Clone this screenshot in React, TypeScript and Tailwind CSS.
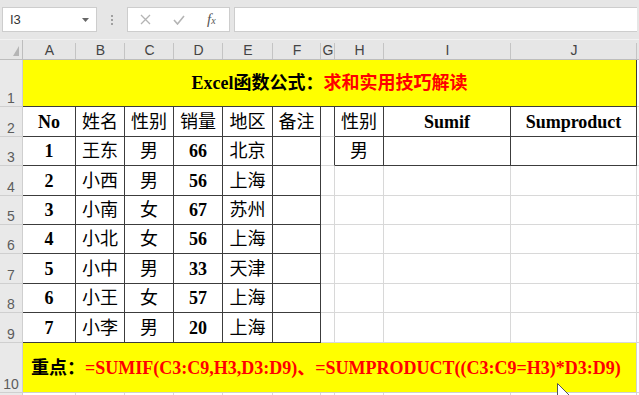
import React from 'react';

const cols = ['A', 'B', 'C', 'D', 'E', 'F', 'G', 'H', 'I', 'J'];

const people = [
  ['1', '王东', '男', '66', '北京'],
  ['2', '小西', '男', '56', '上海'],
  ['3', '小南', '女', '67', '苏州'],
  ['4', '小北', '女', '56', '上海'],
  ['5', '小中', '男', '33', '天津'],
  ['6', '小王', '女', '57', '上海'],
  ['7', '小李', '男', '20', '上海'],
];

const rowHeights = ['h-[29px]', 'h-[30px]', 'h-[29px]', 'h-[29px]', 'h-[30px]', 'h-[29px]', 'h-[30px]'];

const light = 'border-r border-b border-[#d8d8d8]';
const dark = 'border-r border-b border-[#3c3c3c]';

function RowHead({ n, h }: { n?: string; h: string }) {
  return (
    <div className={`${h} flex items-end justify-center bg-[#e9e9e9] border-r border-b border-[#cfcfcf] pb-[1px] font-['Liberation_Sans',sans-serif] text-[14px] leading-none text-[#5c5c5c]`}>
      {n}
    </div>
  );
}

function Cell({ children, border = light, bold, h }: { children?: React.ReactNode; border?: string; bold?: boolean; h: string }) {
  return (
    <div className={`${h} ${border} flex items-center justify-center text-[18px] leading-none text-black ${bold ? 'font-bold' : 'font-normal'}`}>
      {children}
    </div>
  );
}

function Toolbar() {
  return (
    <div className="flex h-[40px] items-start gap-0 border-b border-[#f2f2f2] bg-[#e6e6e6] px-[2px] pt-[7px] font-['Liberation_Sans',sans-serif]">
      <div className="flex h-[25px] w-[95px] items-center justify-between border border-[#cdcdcd] bg-white pl-[7px] pr-[7px] text-[13px] text-[#333]">
        <span>I3</span>
        <svg width="7" height="4" viewBox="0 0 7 4">
          <path d="M0 0h7L3.5 4z" fill="#666" />
        </svg>
      </div>
      <div className="flex h-[25px] w-[30px] flex-col items-center justify-center gap-[2px]">
        <span className="h-[2px] w-[2px] bg-[#a0a0a0]" />
        <span className="h-[2px] w-[2px] bg-[#a0a0a0]" />
        <span className="h-[2px] w-[2px] bg-[#a0a0a0]" />
      </div>
      <div className="flex h-[25px] w-[103px] items-center border border-[#cdcdcd] bg-white">
        <svg className="ml-[12px]" width="11" height="11" viewBox="0 0 11 11">
          <path d="M1 1l9 9M10 1l-9 9" stroke="#b4b4b4" strokeWidth="1.3" />
        </svg>
        <svg className="ml-[22px]" width="12" height="10" viewBox="0 0 12 10">
          <path d="M1 5l3.5 4L11 1" stroke="#b4b4b4" strokeWidth="1.6" fill="none" />
        </svg>
        <span className="ml-[22px] font-['Liberation_Serif',serif] text-[15px] italic leading-none text-[#555]">
          f<span className="text-[10px]">x</span>
        </span>
      </div>
      <div className="ml-[4px] h-[25px] flex-1 border border-[#cdcdcd] border-r-0 bg-white" />
    </div>
  );
}

export default function App() {
  return (
    <div className="relative h-[395px] w-[639px] overflow-hidden bg-white">
      <Toolbar />
      <div className="grid grid-cols-[23px_53px_49px_49px_49px_50px_48px_14px_49px_127px_126px_1fr] font-['Liberation_Serif','Noto_Sans_CJK_SC',serif]">
        {/* column header */}
        <div className="relative h-[20px] border-r border-b border-[#bdbdbd] bg-[#e6e6e6]">
          <svg className="absolute bottom-[3px] right-[3px]" width="6" height="10" viewBox="0 0 6 10">
            <path d="M6 0v10H0z" fill="#b5b5b5" />
          </svg>
        </div>
        {cols.map((c) => (
          <div key={c} className="relative flex h-[20px] items-end justify-center border-b border-[#bdbdbd] bg-[#e6e6e6] pb-[2px] font-['Liberation_Sans',sans-serif] text-[14px] leading-none text-[#444]">
            <span className="absolute bottom-0 right-0 top-[3px] w-px bg-[#c4c4c4]" />
            {c}
          </div>
        ))}
        <div className="h-[20px] border-b border-[#bdbdbd] bg-[#e6e6e6]" />

        {/* row 1 */}
        <RowHead n="1" h="h-[47px]" />
        <div className="col-span-10 flex h-[47px] items-center justify-center border-r border-b border-[#3c3c3c] bg-[#ffff00] text-[18px] font-bold leading-none">
          <span className="text-black">Excel函数公式：</span>
          <span className="text-[#ff0000]">求和实用技巧解读</span>
        </div>
        <div className="h-[47px] border-b border-[#d8d8d8]" />

        {/* row 2 */}
        <RowHead n="2" h="h-[30px]" />
        <Cell h="h-[30px]" border={dark} bold>No</Cell>
        <Cell h="h-[30px]" border={dark}>姓名</Cell>
        <Cell h="h-[30px]" border={dark}>性别</Cell>
        <Cell h="h-[30px]" border={dark}>销量</Cell>
        <Cell h="h-[30px]" border={dark}>地区</Cell>
        <Cell h="h-[30px]" border={dark}>备注</Cell>
        <Cell h="h-[30px]" border="border-r border-b border-r-[#3c3c3c] border-b-[#d8d8d8]" />
        <Cell h="h-[30px]" border={dark}>性别</Cell>
        <Cell h="h-[30px]" border={dark} bold>Sumif</Cell>
        <Cell h="h-[30px]" border={dark} bold>Sumproduct</Cell>
        <div className="h-[30px] border-b border-[#d8d8d8]" />

        {/* rows 3-9 */}
        {people.map((p, i) => {
          const h = rowHeights[i];
          const first = i === 0;
          return (
            <React.Fragment key={p[0]}>
              <RowHead n={String(i + 3)} h={h} />
              <Cell h={h} border={dark} bold>{p[0]}</Cell>
              <Cell h={h} border={dark}>{p[1]}</Cell>
              <Cell h={h} border={dark}>{p[2]}</Cell>
              <Cell h={h} border={dark} bold>{p[3]}</Cell>
              <Cell h={h} border={dark}>{p[4]}</Cell>
              <Cell h={h} border={dark} />
              <Cell h={h} border={first ? 'border-r border-b border-r-[#3c3c3c] border-b-[#d8d8d8]' : light} />
              <Cell h={h} border={first ? dark : light}>{first ? '男' : null}</Cell>
              <Cell h={h} border={first ? dark : light} />
              <Cell h={h} border={first ? dark : light} />
              <div className={`${h} border-b border-[#d8d8d8]`} />
            </React.Fragment>
          );
        })}

        {/* row 10 */}
        <RowHead n="10" h="h-[50px]" />
        <div className="col-span-10 flex h-[50px] items-center whitespace-nowrap border-r border-b border-[#d0d0d0] bg-[#ffff00] pl-[8px] text-[18px] font-bold leading-none">
          <span className="text-black">重点：</span>
          <span className="text-[#ff0000]">=SUMIF(C3:C9,H3,D3:D9)、=SUMPRODUCT((C3:C9=H3)*D3:D9)</span>
        </div>
        <div className="h-[50px] border-b border-[#d8d8d8]" />

        {/* row 11, only its top edge shows */}
        <RowHead h="h-[29px]" />
        {cols.map((c) => (
          <div key={c} className={`h-[29px] ${light}`} />
        ))}
        <div className="h-[29px]" />
      </div>

      {/* mouse pointer */}
      <svg className="absolute left-[557px] top-[383px]" width="13" height="21" viewBox="0 0 13 21">
        <path d="M0.5 0.5v17l4-4 3 7 2.5-1-3-7h5.5z" fill="#fff" stroke="#555" strokeWidth="1" />
      </svg>
    </div>
  );
}
